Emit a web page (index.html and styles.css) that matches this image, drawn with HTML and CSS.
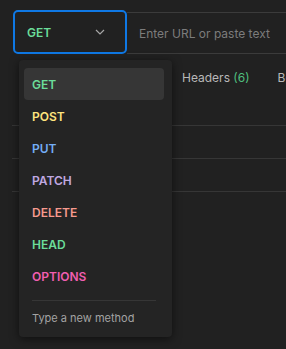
FILE: index.html
```html
<!DOCTYPE html>
<html lang="en">
<head>
    <meta charset="UTF-8">
    <meta name="viewport" content="width=device-width, initial-scale=1.0">
    <title>Request</title>
    <link rel="stylesheet" href="styles.css">
</head>
<body>

    <!-- URL bar -->
    <div class="url-bar">
        <div class="method-select">
            <span class="method get">GET</span>
            <svg class="chevron" width="10" height="6" viewBox="0 0 10 6">
                <path d="M1 1 L5 5 L9 1" fill="none" stroke="#a6a6a6" stroke-width="1.2"/>
            </svg>
        </div>
        <div class="url-input">Enter URL or paste text</div>
    </div>

    <!-- Request tabs + table behind the menu -->
    <div class="request">
        <div class="tabs">
            <span class="tab">Headers <span class="count">(6)</span></span>
            <span class="tab">Body</span>
        </div>
        <div class="table">
            <div class="row"></div>
            <div class="row"></div>
            <div class="row"></div>
        </div>
    </div>

    <!-- Method dropdown -->
    <div class="menu">
        <div class="item active"><span class="method get">GET</span></div>
        <div class="item"><span class="method post">POST</span></div>
        <div class="item"><span class="method put">PUT</span></div>
        <div class="item"><span class="method patch">PATCH</span></div>
        <div class="item"><span class="method delete">DELETE</span></div>
        <div class="item"><span class="method head">HEAD</span></div>
        <div class="item"><span class="method options">OPTIONS</span></div>
        <div class="divider"></div>
        <div class="new-method">Type a new method</div>
    </div>

</body>
</html>
```

FILE: styles.css
```css
body {
    margin: 0;
    background-color: #212121;
    font-family: Inter, 'Noto Sans', sans-serif;
    color: #b3b3b3;
    height: 349px;
    overflow: hidden;
}

/* URL bar */
.url-bar {
    display: flex;
    align-items: flex-start;
    padding: 10px 0 0 13px;
}

.method-select {
    box-sizing: border-box;
    width: 114px;
    height: 44px;
    border: 2px solid #0f78e4;
    border-radius: 5px;
    display: flex;
    align-items: center;
    justify-content: space-between;
    padding: 0 20px 0 12px;
}

.chevron {
    display: block;
}

.url-input {
    flex: 1;
    box-sizing: border-box;
    height: 42px;
    margin-top: 2px;
    border-top: 1px solid #3b3b3b;
    border-bottom: 1px solid #3b3b3b;
    padding-left: 12px;
    display: flex;
    align-items: center;
    font-size: 12px;
    color: #7c7c7c;
    white-space: nowrap;
}

/* Method colours */
.method {
    font-size: 12px;
    font-weight: 600;
}

.get, .head { color: #6bdd9a; }
.post { color: #ffe47e; }
.put { color: #74aef6; }
.patch { color: #c0a8e1; }
.delete { color: #f79a8e; }
.options { color: #f15eb0; }

/* Tabs and table (mostly hidden behind the menu) */
.request {
    padding-left: 12px;
}

.tabs {
    display: flex;
    gap: 28px;
    padding-left: 170px;
    height: 36px;
    align-items: center;
    margin-top: 5px;
    font-size: 12px;
    color: #b8b8b8;
    white-space: nowrap;
}

.tabs .count {
    color: #4fbf7e;
}

.table {
    margin-top: 30px;
}

.row {
    height: 32px;
    border-top: 1px solid #363636;
}

/* Dropdown */
.menu {
    position: absolute;
    left: 19px;
    top: 60px;
    width: 153px;
    box-sizing: border-box;
    padding: 8px 8px 0 5px;
    height: 277px;
    background-color: #242424;
    border-radius: 4px;
    box-shadow: 0 2px 10px rgba(0, 0, 0, 0.55);
}

.item {
    height: 32px;
    display: flex;
    align-items: center;
    padding-left: 8px;
    border-radius: 4px;
}

.item.active {
    background-color: #363636;
}

.divider {
    height: 1px;
    background-color: #363636;
    margin: 8px 8px 0 8px;
}

.new-method {
    padding: 10px 0 0 8px;
    font-size: 11px;
    color: #a3a3a3;
}
```
